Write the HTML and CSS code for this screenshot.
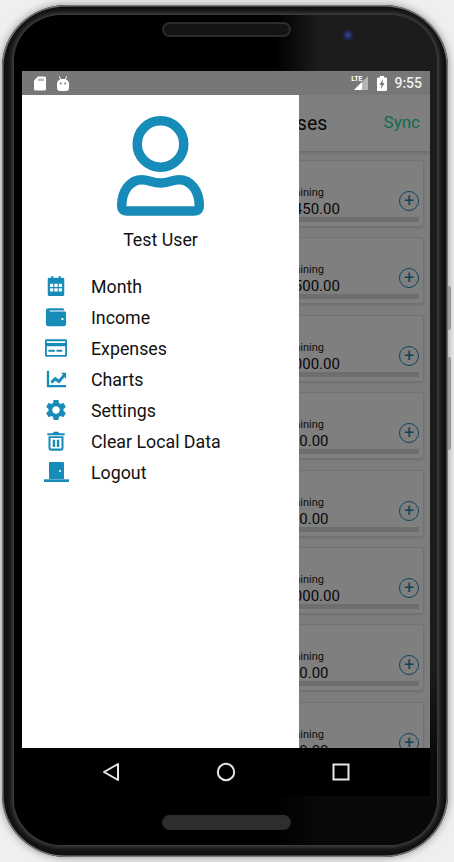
FILE: index.html
```html
<!DOCTYPE html>
<html lang="en">
<head>
    <meta charset="UTF-8">
    <title>Budget App</title>
    <link rel="stylesheet" href="styles.css">
</head>
<body>
    <div class="phone">
        <div class="side-button power"></div>
        <div class="side-button volume"></div>

        <div class="bezel">
            <div class="speaker"></div>
            <div class="camera"></div>

            <div class="screen">
                <div class="status-bar">
                    <svg class="status-icon" width="12" height="15" viewBox="0 0 12 14"><path d="M4 0h6.500A1.500 1.500 0 0 1 12 1.500V12.500A1.500 1.500 0 0 1 10.500 14H1.500A1.500 1.500 0 0 1 0 12.500V4z" fill="#fff"/><rect x="4" y="2" width="6" height="2.500" fill="#bbb"/></svg>
                    <svg class="status-icon" width="12" height="15" viewBox="0 0 12 15"><path d="M2.500 0l1.500 3h4L9.500 0l.6.300L9 3.400c1.800.8 3 2.300 3 4.100v4.500c0 1.700-1.300 3-3 3H3c-1.700 0-3-1.300-3-3V7.500c0-1.800 1.200-3.300 3-4.100L1.900.3z" fill="#fff"/><circle cx="3.800" cy="7.500" r="1" fill="#777"/><circle cx="8.200" cy="7.500" r="1" fill="#777"/></svg>
                    <span class="status-spacer"></span>
                    <span class="lte">LTE</span>
                    <svg class="signal" width="14" height="14" viewBox="0 0 14 14"><path d="M14 0V14H0z" fill="#b5b5b5"/><path d="M8 6V14H0z" fill="#fff"/></svg>
                    <svg class="battery" width="10" height="15" viewBox="0 0 10 15"><path d="M3 0h4v1.500h2.200A.8.8 0 0 1 10 2.300V14.200a.8.8 0 0 1-.8.8H.8a.8.8 0 0 1-.8-.8V2.300a.8.8 0 0 1 .8-.8H3z" fill="#fff"/><path d="M6 3L2.500 9h2L4 13l3.500-6h-2z" fill="#777"/></svg>
                    <span class="clock">9:55</span>
                </div>

                <div class="app">
                    <header class="app-bar">
                        <h1>Expenses</h1>
                        <span class="sync">Sync</span>
                    </header>

                    <main class="cards">
                        <div class="card"><div class="card-text"><span class="label">Remaining</span><span class="amount">$1,450.00</span></div><div class="add">+</div><div class="bar"></div></div>
                        <div class="card"><div class="card-text"><span class="label">Remaining</span><span class="amount">$1,500.00</span></div><div class="add">+</div><div class="bar"></div></div>
                        <div class="card"><div class="card-text"><span class="label">Remaining</span><span class="amount">$1,000.00</span></div><div class="add">+</div><div class="bar"></div></div>
                        <div class="card"><div class="card-text"><span class="label">Remaining</span><span class="amount">$500.00</span></div><div class="add">+</div><div class="bar"></div></div>
                        <div class="card"><div class="card-text"><span class="label">Remaining</span><span class="amount">$300.00</span></div><div class="add">+</div><div class="bar"></div></div>
                        <div class="card"><div class="card-text"><span class="label">Remaining</span><span class="amount">$1,000.00</span></div><div class="add">+</div><div class="bar"></div></div>
                        <div class="card"><div class="card-text"><span class="label">Remaining</span><span class="amount">$250.00</span></div><div class="add">+</div><div class="bar"></div></div>
                        <div class="card"><div class="card-text"><span class="label">Remaining</span><span class="amount">$200.00</span></div><div class="add">+</div><div class="bar"></div></div>
                    </main>

                    <div class="scrim"></div>

                    <nav class="drawer">
                        <svg class="avatar" width="90" height="102" viewBox="0 0 90 102" fill="none" stroke="#178cb8" stroke-width="9.500">
                            <circle cx="44.500" cy="29" r="23.300"/>
                            <path d="M5.700 91C5.700 76 14 64.700 26 64.700C33 64.700 36 68 44.500 68C53 68 56 64.700 63 64.700C75 64.700 83.300 76 83.300 91Q83.300 96 78.500 96H10.500Q5.700 96 5.700 91Z"/>
                        </svg>
                        <div class="user-name">Test User</div>

                        <ul class="menu">
                            <li>
                                <svg class="menu-icon" viewBox="0 0 24 24"><path fill-rule="evenodd" d="M7 1h2v2h6V1h2v2h2.500A1.500 1.500 0 0 1 21 4.500v17a1.500 1.500 0 0 1-1.500 1.500h-15A1.500 1.500 0 0 1 3 21.500v-17A1.500 1.500 0 0 1 4.500 3H7zM5.500 9.500v3.500h3.500V9.500zM10.200 9.500v3.500h3.600V9.500zM15 9.500v3.500h3.500V9.500zM5.500 14.500v3.500h3.500v-3.500zM10.200 14.500v3.500h3.600v-3.500zM15 14.500v3.500h3.500v-3.500z"/></svg>
                                Month
                            </li>
                            <li>
                                <svg class="menu-icon" viewBox="0 0 24 24"><path fill-rule="evenodd" d="M3.500 2.500H19a2 2 0 0 1 2 2V5H5v1h16.500A1.500 1.500 0 0 1 23 7.500V20a2 2 0 0 1-2 2H3a2 2 0 0 1-2-2V5a2.500 2.500 0 0 1 2.500-2.500zM19 13a1.300 1.300 0 1 0 0 2.600 1.300 1.300 0 0 0 0-2.600z"/></svg>
                                Income
                            </li>
                            <li>
                                <svg class="menu-icon" viewBox="0 0 24 24"><path fill-rule="evenodd" d="M1.500 2.500h21A1.500 1.500 0 0 1 24 4v16a1.500 1.500 0 0 1-1.500 1.500h-21A1.500 1.500 0 0 1 0 20V4a1.500 1.500 0 0 1 1.500-1.500zM2 4.500v2h20v-2zM2 10v9.500h20V10zM3.600 14H10.700v2H3.600zM12.500 14h6.300v2h-6.300z"/></svg>
                                Expenses
                            </li>
                            <li>
                                <svg class="menu-icon" viewBox="0 0 24 24"><path d="M2 3h2.500v15.500H23V21H2z"/><path d="M6 14.500l5-5 4 3 4.500-5.500-2.300-1.700H23v6.200l-1.800-1.500-5.700 7-4.300-3.200-3.500 3.500z"/></svg>
                                Charts
                            </li>
                            <li>
                                <svg class="menu-icon" viewBox="1.500 1.500 21 21"><path d="M19.140 12.940c.04-.3.06-.61.06-.94 0-.32-.02-.64-.07-.94l2.030-1.580a.49.49 0 0 0 .12-.61l-1.920-3.320a.488.488 0 0 0-.59-.22l-2.390.96c-.5-.38-1.030-.7-1.620-.94l-.36-2.540a.484.484 0 0 0-.48-.41h-3.840c-.24 0-.43.17-.47.41l-.36 2.540c-.59.24-1.130.57-1.620.94l-2.390-.96c-.22-.08-.47 0-.59.22L2.740 8.870c-.12.21-.08.47.12.61l2.030 1.580c-.05.3-.09.63-.09.94s.02.64.07.94l-2.030 1.580a.49.49 0 0 0-.12.61l1.920 3.320c.12.22.37.29.59.22l2.390-.96c.5.38 1.030.7 1.620.94l.36 2.540c.05.24.24.41.48.41h3.840c.24 0 .44-.17.47-.41l.36-2.540c.59-.24 1.130-.56 1.620-.94l2.390.96c.22.08.47 0 .59-.22l1.920-3.320c.12-.22.07-.47-.12-.61l-2.010-1.580zM12 15.600c-1.980 0-3.600-1.620-3.600-3.600s1.620-3.600 3.600-3.600 3.600 1.620 3.600 3.600-1.620 3.600-3.600 3.600z"/></svg>
                                Settings
                            </li>
                            <li>
                                <svg class="menu-icon" viewBox="0 0 24 24"><path fill-rule="evenodd" d="M9 2h6v1.500h6.500v2.300h-19V3.500H9zM3.800 6.800h16.400V20a2.500 2.500 0 0 1-2.500 2.500H6.300A2.500 2.500 0 0 1 3.800 20zM6 8.800V20a.3.3 0 0 0 .3.300h11.400a.3.3 0 0 0 .3-.300V8.800z"/><path d="M8.500 10.500h2.600v8H8.500zM12.900 10.500h2.600v8h-2.600z"/></svg>
                                Clear Local Data
                            </li>
                            <li>
                                <svg class="door-icon" width="25" height="20" viewBox="0 0 25 20"><path fill-rule="evenodd" d="M6 0h13a1 1 0 0 1 1 1v16H5V1a1 1 0 0 1 1-1zM16 8a1 1 0 1 0 0 2 1 1 0 0 0 0-2z"/><path d="M0 17.300h25V20H0z"/></svg>
                                Logout
                            </li>
                        </ul>
                    </nav>
                </div>

                <div class="nav-bar">
                    <svg width="18" height="20" viewBox="0 0 18 20" fill="none" stroke="#e6e6e6" stroke-width="2"><path d="M16 2V18L2 10z" stroke-linejoin="round"/></svg>
                    <svg width="20" height="20" viewBox="0 0 20 20" fill="none" stroke="#e6e6e6" stroke-width="2"><circle cx="10" cy="10" r="8.200"/></svg>
                    <svg width="18" height="18" viewBox="0 0 18 18" fill="none" stroke="#e6e6e6" stroke-width="2"><rect x="1.500" y="1.500" width="15" height="15"/></svg>
                </div>
            </div>

            <div class="speaker bottom"></div>
        </div>
    </div>
</body>
</html>
```

FILE: styles.css
```css
* {
    box-sizing: border-box;
}

html, body {
    margin: 0;
    height: 100%;
}

body {
    background-color: #efefed;
    font-family: Roboto, sans-serif;
    overflow: hidden;
}

/* Device frame */
.phone {
    position: relative;
    width: 446px;
    height: 852px;
    margin: 5px 0 0 2px;
    padding: 10px 11px 12px 12px;
    border-radius: 64px / 62px;
    background-color: #111;
    box-shadow: inset 0 0 0 1.500px #777, 0 0 9px rgba(0, 0, 0, 0.4);
}

.side-button {
    position: absolute;
    right: -3px;
    width: 3px;
    border-radius: 0 2px 2px 0;
    background-color: #999;
}

.side-button.power {
    top: 281px;
    height: 44px;
}

.side-button.volume {
    top: 352px;
    height: 93px;
}

.bezel {
    position: relative;
    height: 100%;
    padding-top: 56px;
    border-radius: 48px / 46px;
    background:
        linear-gradient(to bottom, transparent 78%, rgba(0, 0, 0, 0.7) 90%),
        linear-gradient(to right, #000 62%, #1c1c1c 72%);
    box-shadow: 0 0 5px 2px #4a4a4a;
}

.speaker {
    position: absolute;
    top: 7px;
    left: 148px;
    width: 129px;
    height: 15px;
    border: 2px solid #2c2c2c;
    border-radius: 8px;
    background-color: #141414;
}

.speaker.bottom {
    top: auto;
    bottom: 15px;
    background-color: #2e2e2e;
}

.camera {
    position: absolute;
    top: 14px;
    left: 328px;
    width: 12px;
    height: 12px;
    border-radius: 50%;
    background: radial-gradient(circle, #34488a 0%, #1a2040 55%, #1c1c1c 100%);
}

.screen {
    width: 408px;
    height: 725px;
    margin-left: 8px;
    display: flex;
    flex-direction: column;
}

/* Android status bar */
.status-bar {
    height: 24px;
    flex-shrink: 0;
    padding: 0 8px 0 12px;
    display: flex;
    align-items: center;
    background-color: #777;
}

.status-icon {
    margin-right: 11px;
}

.status-spacer {
    flex: 1;
}

.lte {
    margin: 0 -8px 8px 0;
    color: #fff;
    font-size: 7px;
    font-weight: 700;
}

.signal {
    margin-right: 9px;
}

.battery {
    margin-right: 7px;
}

.clock {
    color: #f0f0f0;
    font-size: 14px;
    font-weight: 500;
}

/* App behind the drawer */
.app {
    position: relative;
    height: 653px;
    flex-shrink: 0;
    overflow: hidden;
    background-color: #fafafa;
}

.app-bar {
    height: 57px;
    padding: 0 10px 2px 0;
    display: flex;
    align-items: center;
    justify-content: space-between;
    background-color: #fff;
    border-bottom: 1px solid #ddd;
    box-shadow: 0 1px 3px rgba(0, 0, 0, 0.15);
}

.app-bar h1 {
    margin: 2px 0 0 222px;
    font-size: 19.500px;
    font-weight: 400;
    color: #111;
}

.sync {
    font-size: 17px;
    color: #1bd898;
}

.cards {
    padding: 8px 6px 0 0;
}

.card {
    position: relative;
    height: 67px;
    margin-bottom: 10.400px;
    padding: 25px 0 0 251px;
    border-radius: 3px;
    background-color: #fff;
    border: 1px solid #e4e4e4;
    box-shadow: 0 1px 2px rgba(0, 0, 0, 0.12);
}

.card-text {
    display: flex;
    flex-direction: column;
}

.label {
    margin-left: -2px;
    font-size: 11px;
    line-height: 14px;
    color: #222;
}

.amount {
    font-size: 15px;
    line-height: 18px;
    color: #111;
}

.add {
    position: absolute;
    right: 4px;
    top: 30px;
    width: 20px;
    height: 20px;
    border: 1px solid #178cb8;
    border-radius: 50%;
    color: #178cb8;
    font-size: 18px;
    line-height: 17px;
    text-align: center;
}

.bar {
    position: absolute;
    left: 0;
    right: 4px;
    bottom: 4px;
    height: 5px;
    background-color: #ddd;
}

.scrim {
    position: absolute;
    inset: 0;
    background-color: rgba(0, 0, 0, 0.5);
}

/* Side drawer */
.drawer {
    position: absolute;
    top: 0;
    left: 0;
    bottom: 0;
    width: 277px;
    padding-top: 20px;
    background-color: #fff;
}

.avatar {
    display: block;
    margin-left: 94px;
}

.user-name {
    margin-top: 12px;
    text-align: center;
    font-size: 17.800px;
    line-height: 22px;
    color: #111;
}

.menu {
    list-style: none;
    margin: 20px 0 0;
    padding: 0;
}

.menu li {
    height: 31px;
    display: flex;
    align-items: center;
    padding-left: 23px;
    font-size: 17.800px;
    color: #111;
}

.menu-icon {
    width: 22px;
    height: 22px;
    margin: -2px 24px 0 0;
    fill: #178cb8;
    flex-shrink: 0;
}

.door-icon {
    margin: -2px 22px 0 -1px;
    fill: #178cb8;
    flex-shrink: 0;
}

/* Android nav buttons */
.nav-bar {
    height: 48px;
    flex-shrink: 0;
    padding: 0 80px;
    display: flex;
    align-items: center;
    justify-content: space-between;
    background-color: #000;
}
```
